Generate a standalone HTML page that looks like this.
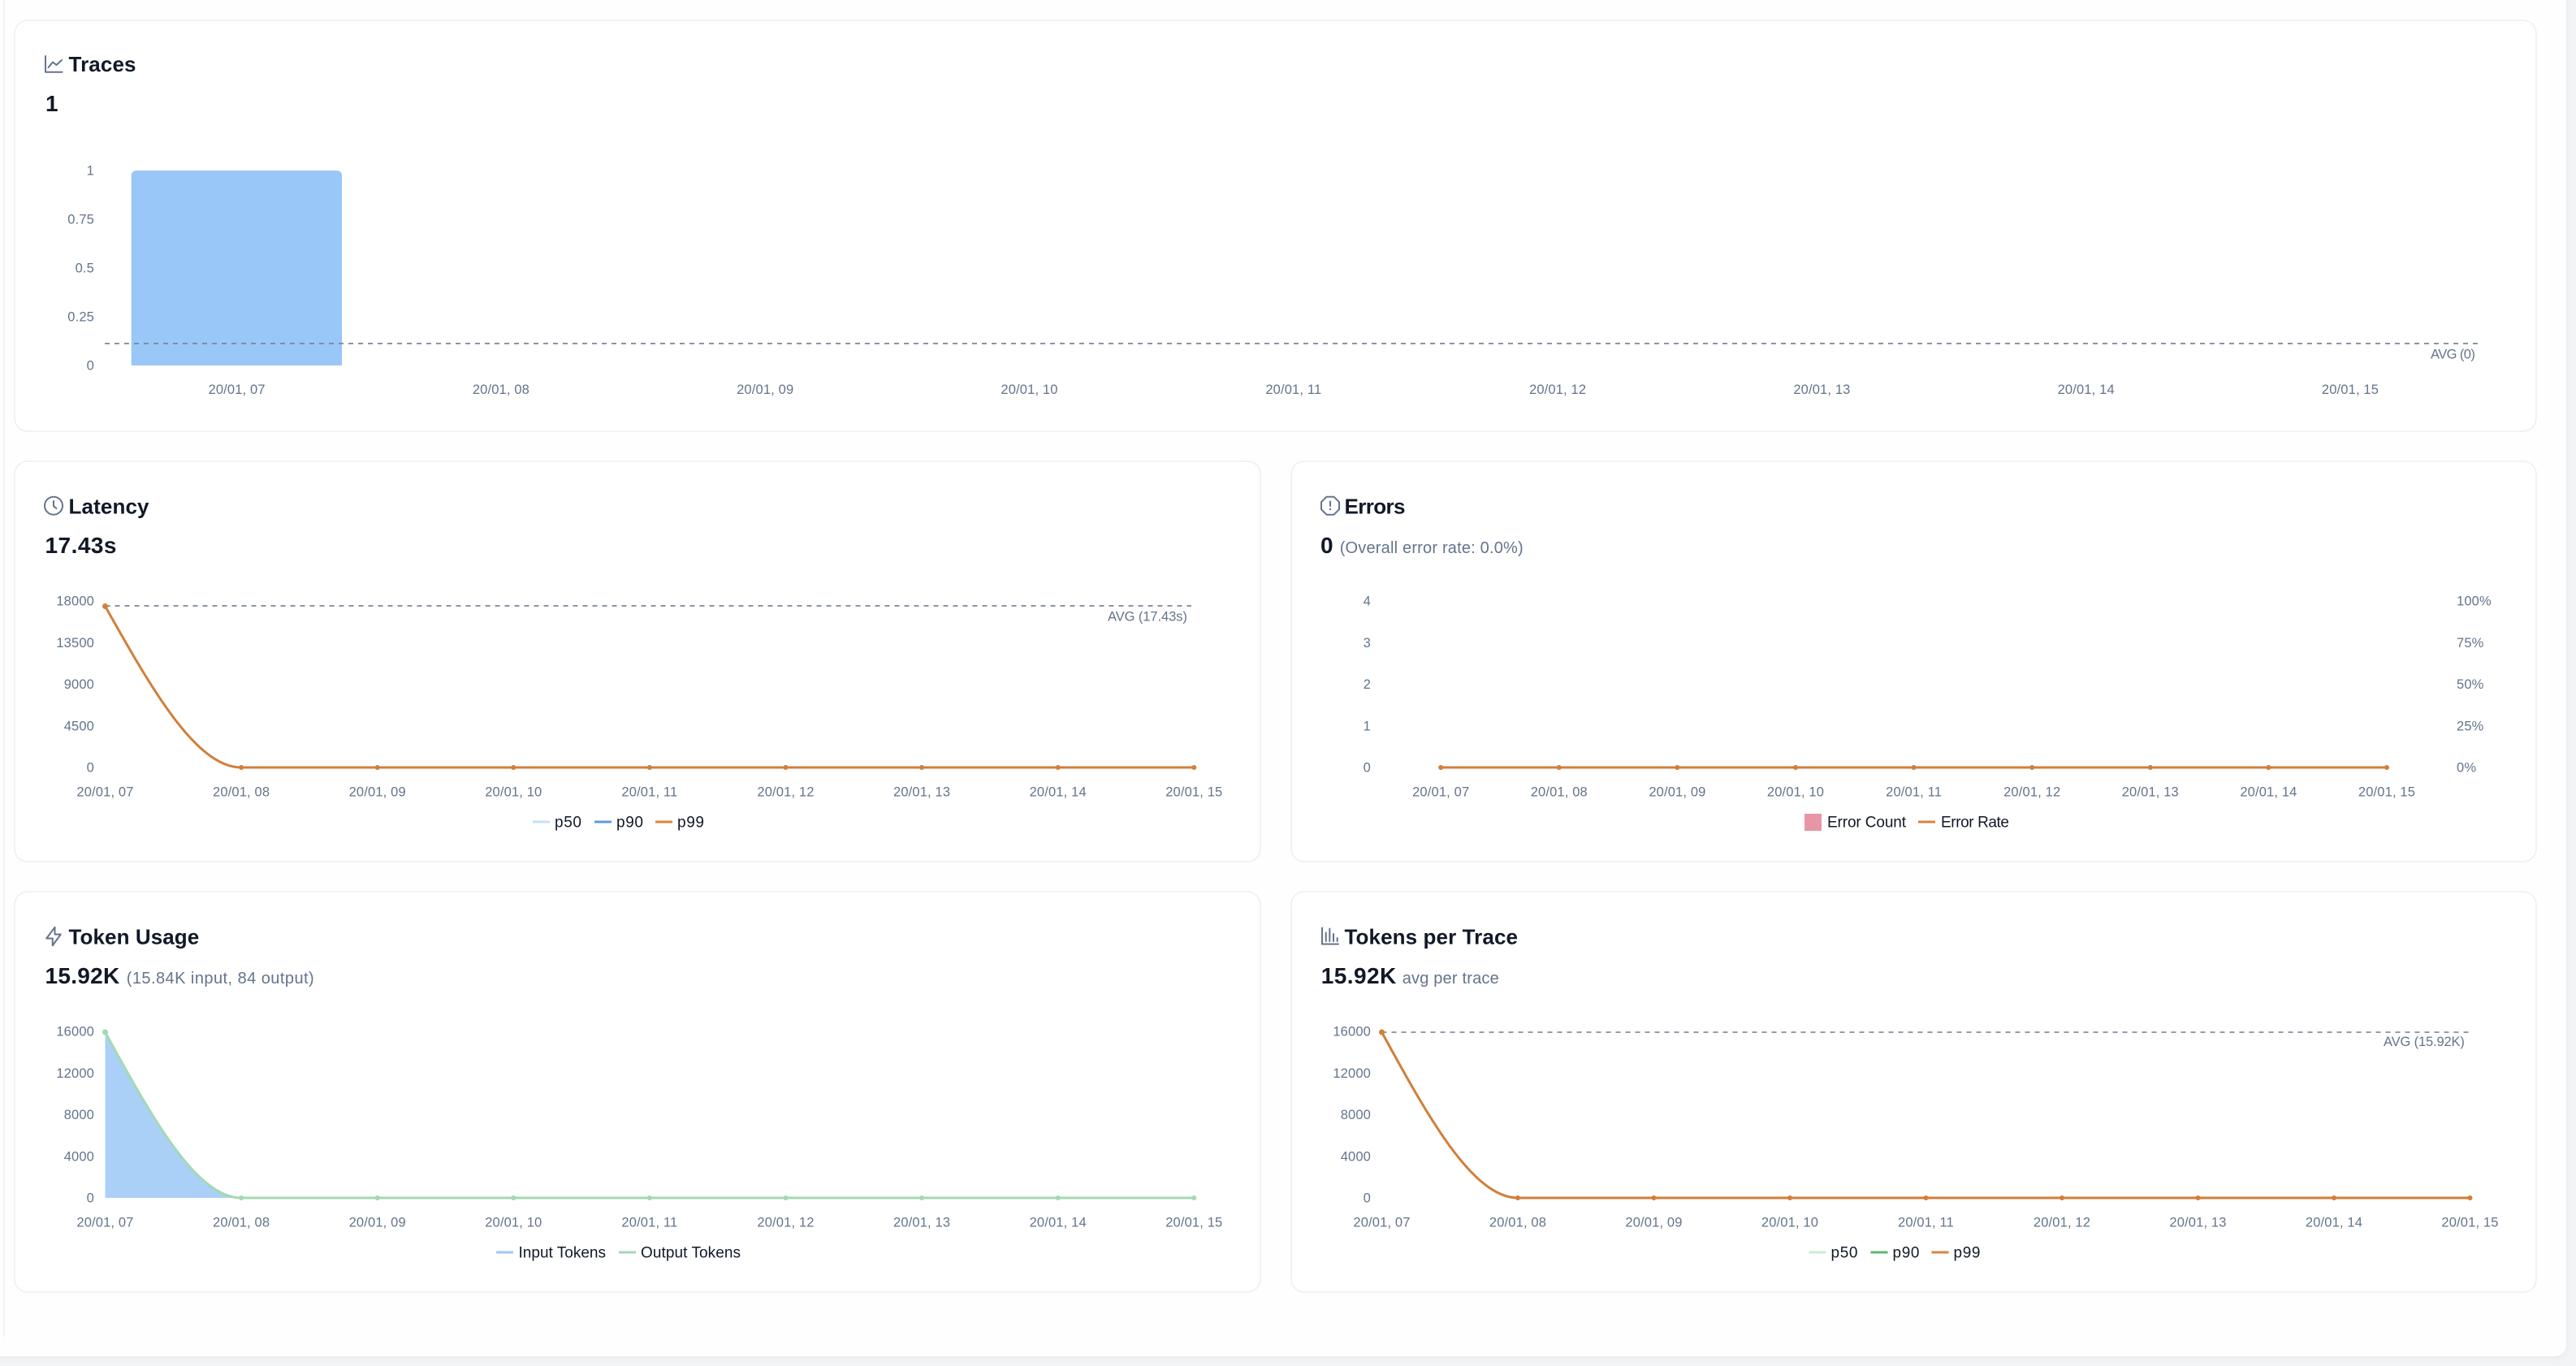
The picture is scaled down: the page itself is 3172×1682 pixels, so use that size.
<!DOCTYPE html>
<html lang="en">
<head>
<meta charset="utf-8">
<title>Dashboard</title>
<style>
html,body{margin:0;padding:0;width:3172px;height:1682px;overflow:hidden;background:#f3f4f6}
svg{position:absolute;left:0;top:0;display:block}
text{font-family:"Liberation Sans",sans-serif}
.t{font-size:26px;font-weight:700;fill:#111827}
.v{font-size:28px;font-weight:700;fill:#111827}
.s{font-size:20px;fill:#64748b}
.a{font-size:16.5px;fill:#64748b;letter-spacing:.15px}
.m{text-anchor:middle}
.e{text-anchor:end}
.l{font-size:19px;fill:#111827}
.c{fill:#fff;stroke:#eeeff2;stroke-width:1.6}
.i{fill:none;stroke:#64748b;stroke-width:2;stroke-linecap:round;stroke-linejoin:round}
.d{fill:none;stroke:#7a8696;stroke-width:1.8;stroke-dasharray:6 6}
.o{fill:none;stroke:#d17f3a;stroke-width:3}
.g{fill:none;stroke:#a3d9b3;stroke-width:3}
.od{fill:#d17f3a}
.gd{fill:#a3d9b3}
</style>
</head>
<body>
<svg width="3172" height="1682" viewBox="0 0 3172 1682" xmlns="http://www.w3.org/2000/svg">
<defs>
<filter id="sh" x="-2%" y="-2%" width="104%" height="104%"><feDropShadow dx="0" dy="2" stdDeviation="4" flood-color="#000" flood-opacity=".05"/></filter>
</defs>
<rect x="-20" y="-20" width="3180" height="1690" rx="14" fill="#fefefe" filter="url(#sh)"/>
<line x1="5" y1="0" x2="5" y2="1646" stroke="#eeeff2" stroke-width="1.5"/>

<!-- cards -->
<rect class="c" x="18" y="25" width="3105" height="506" rx="16"/>
<rect class="c" x="18" y="568" width="1534" height="493" rx="16"/>
<rect class="c" x="1590" y="568" width="1533" height="493" rx="16"/>
<rect class="c" x="18" y="1098" width="1534" height="493" rx="16"/>
<rect class="c" x="1590" y="1098" width="1533" height="493" rx="16"/>

<!-- Traces -->
<path class="i" d="M56 69V88.8H76.5"/>
<path class="i" d="M59.5 83L65 76.5L69.5 80L76 74"/>
<text class="t" x="84.5" y="88" textLength="83">Traces</text>
<text class="v" x="56" y="137">1</text>
<text class="a e" x="116" y="215.7">1</text>
<text class="a e" x="116" y="275.7">0.75</text>
<text class="a e" x="116" y="335.7">0.5</text>
<text class="a e" x="116" y="395.7">0.25</text>
<text class="a e" x="116" y="455.7">0</text>
<path d="M161.7 216a6 6 0 0 1 6-6H415a6 6 0 0 1 6 6V450H161.7z" fill="#99c7f8"/>
<line class="d" x1="129" y1="423" x2="3051" y2="423"/>
<text class="a" x="2993" y="441.5" textLength="55">AVG (0)</text>
<text class="a m" x="291.6" y="485">20/01, 07</text>
<text class="a m" x="616.9" y="485">20/01, 08</text>
<text class="a m" x="942.2" y="485">20/01, 09</text>
<text class="a m" x="1267.5" y="485">20/01, 10</text>
<text class="a m" x="1592.8" y="485">20/01, 11</text>
<text class="a m" x="1918.1" y="485">20/01, 12</text>
<text class="a m" x="2243.4" y="485">20/01, 13</text>
<text class="a m" x="2568.7" y="485">20/01, 14</text>
<text class="a m" x="2894" y="485">20/01, 15</text>

<!-- Latency -->
<circle class="i" cx="66" cy="622.7" r="11"/>
<path class="i" d="M66 617V623.3L69.5 626"/>
<text class="t" x="84.5" y="632.7" textLength="99">Latency</text>
<text class="v" x="55.5" y="681" textLength="88">17.43s</text>
<text class="a e" x="116" y="745.7">18000</text>
<text class="a e" x="116" y="797">13500</text>
<text class="a e" x="116" y="848.2">9000</text>
<text class="a e" x="116" y="899.5">4500</text>
<text class="a e" x="116" y="950.7">0</text>
<line class="d" x1="129.5" y1="746" x2="1467" y2="746"/>
<text class="a" x="1364" y="764.5" textLength="98">AVG (17.43s)</text>
<path class="o" d="M129.5 746.5C185.4 845.75 241.1 945 297.1 945H1470.3"/>
<g class="od">
<circle cx="129.5" cy="746.5" r="3.5"/><circle cx="297.1" cy="945" r="3"/><circle cx="464.7" cy="945" r="3"/><circle cx="632.3" cy="945" r="3"/><circle cx="799.9" cy="945" r="3"/><circle cx="967.5" cy="945" r="3"/><circle cx="1135.1" cy="945" r="3"/><circle cx="1302.7" cy="945" r="3"/><circle cx="1470.3" cy="945" r="3"/>
</g>
<text class="a m" x="129.5" y="980.7">20/01, 07</text>
<text class="a m" x="297.1" y="980.7">20/01, 08</text>
<text class="a m" x="464.7" y="980.7">20/01, 09</text>
<text class="a m" x="632.3" y="980.7">20/01, 10</text>
<text class="a m" x="799.9" y="980.7">20/01, 11</text>
<text class="a m" x="967.5" y="980.7">20/01, 12</text>
<text class="a m" x="1135.1" y="980.7">20/01, 13</text>
<text class="a m" x="1302.7" y="980.7">20/01, 14</text>
<text class="a m" x="1470.3" y="980.7">20/01, 15</text>
<line x1="656" y1="1012" x2="677" y2="1012" stroke="#c3e0f9" stroke-width="3"/>
<text class="l" x="683" y="1018.3" textLength="33">p50</text>
<line x1="732" y1="1012" x2="753" y2="1012" stroke="#5b9bdf" stroke-width="3"/>
<text class="l" x="759" y="1018.3" textLength="33">p90</text>
<line x1="807" y1="1012" x2="828" y2="1012" stroke="#d9853f" stroke-width="3"/>
<text class="l" x="834" y="1018.3" textLength="33">p99</text>

<!-- Errors -->
<path class="i" d="M1633.5 611.7H1642.5L1649 618.2V627.2L1642.5 633.7H1633.5L1627 627.2V618.2Z"/>
<path class="i" d="M1638 617.5V623"/>
<circle cx="1638" cy="627" r="1.2" fill="#64748b"/>
<text class="t" x="1655.5" y="632.7" textLength="75">Errors</text>
<text class="v" x="1626" y="681">0</text>
<text class="s" x="1649.7" y="681" textLength="226">(Overall error rate: 0.0%)</text>
<text class="a e" x="1688" y="745.7">4</text>
<text class="a e" x="1688" y="797">3</text>
<text class="a e" x="1688" y="848.2">2</text>
<text class="a e" x="1688" y="899.5">1</text>
<text class="a e" x="1688" y="950.7">0</text>
<text class="a" x="3025" y="745.7">100%</text>
<text class="a" x="3025" y="797">75%</text>
<text class="a" x="3025" y="848.2">50%</text>
<text class="a" x="3025" y="899.5">25%</text>
<text class="a" x="3025" y="950.7">0%</text>
<path class="o" d="M1774.2 945H2939"/>
<g class="od">
<circle cx="1774.2" cy="945" r="3"/><circle cx="1919.8" cy="945" r="3"/><circle cx="2065.4" cy="945" r="3"/><circle cx="2211" cy="945" r="3"/><circle cx="2356.6" cy="945" r="3"/><circle cx="2502.2" cy="945" r="3"/><circle cx="2647.8" cy="945" r="3"/><circle cx="2793.4" cy="945" r="3"/><circle cx="2939" cy="945" r="3"/>
</g>
<text class="a m" x="1774.2" y="980.7">20/01, 07</text>
<text class="a m" x="1919.8" y="980.7">20/01, 08</text>
<text class="a m" x="2065.4" y="980.7">20/01, 09</text>
<text class="a m" x="2211" y="980.7">20/01, 10</text>
<text class="a m" x="2356.6" y="980.7">20/01, 11</text>
<text class="a m" x="2502.2" y="980.7">20/01, 12</text>
<text class="a m" x="2647.8" y="980.7">20/01, 13</text>
<text class="a m" x="2793.4" y="980.7">20/01, 14</text>
<text class="a m" x="2939" y="980.7">20/01, 15</text>
<rect x="2222" y="1002" width="21" height="21" fill="#e995a8"/>
<text class="l" x="2250" y="1018.3" textLength="97">Error Count</text>
<line x1="2362" y1="1012" x2="2383" y2="1012" stroke="#d9853f" stroke-width="3"/>
<text class="l" x="2390" y="1018.3" textLength="84">Error Rate</text>

<!-- Token Usage -->
<path class="i" d="M67.5 1141.75V1150.5H74.75L64.75 1164.25V1155.5H57.25Z"/>
<text class="t" x="84.5" y="1162.7" textLength="160.7">Token Usage</text>
<text class="v" x="55.5" y="1211" textLength="91.7">15.92K</text>
<text class="s" x="155.7" y="1211" textLength="231">(15.84K input, 84 output)</text>
<text class="a e" x="116" y="1275.5">16000</text>
<text class="a e" x="116" y="1327">12000</text>
<text class="a e" x="116" y="1378">8000</text>
<text class="a e" x="116" y="1429.3">4000</text>
<text class="a e" x="116" y="1480.5">0</text>
<path d="M129.5 1271C185.4 1373 241.1 1475 297.1 1475H129.5Z" fill="#abd0f7"/>
<path class="g" d="M129.5 1271C185.4 1373 241.1 1475 297.1 1475H1470.3"/>
<g class="gd">
<circle cx="129.5" cy="1271" r="3.5"/><circle cx="297.1" cy="1475" r="3"/><circle cx="464.7" cy="1475" r="3"/><circle cx="632.3" cy="1475" r="3"/><circle cx="799.9" cy="1475" r="3"/><circle cx="967.5" cy="1475" r="3"/><circle cx="1135.1" cy="1475" r="3"/><circle cx="1302.7" cy="1475" r="3"/><circle cx="1470.3" cy="1475" r="3"/>
</g>
<text class="a m" x="129.5" y="1510.7">20/01, 07</text>
<text class="a m" x="297.1" y="1510.7">20/01, 08</text>
<text class="a m" x="464.7" y="1510.7">20/01, 09</text>
<text class="a m" x="632.3" y="1510.7">20/01, 10</text>
<text class="a m" x="799.9" y="1510.7">20/01, 11</text>
<text class="a m" x="967.5" y="1510.7">20/01, 12</text>
<text class="a m" x="1135.1" y="1510.7">20/01, 13</text>
<text class="a m" x="1302.7" y="1510.7">20/01, 14</text>
<text class="a m" x="1470.3" y="1510.7">20/01, 15</text>
<line x1="611" y1="1542" x2="632" y2="1542" stroke="#9fc9f7" stroke-width="3"/>
<text class="l" x="638.5" y="1548.3" textLength="107.5">Input Tokens</text>
<line x1="762" y1="1542" x2="783" y2="1542" stroke="#a3d9b3" stroke-width="3"/>
<text class="l" x="789" y="1548.3" textLength="123">Output Tokens</text>

<!-- Tokens per Trace -->
<path class="i" d="M1628 1142.5V1162.5H1648"/>
<path class="i" stroke-width="1.8" d="M1632.7 1148.5V1159M1637.3 1143.5V1159M1642 1150V1159M1646.7 1155V1159"/>
<text class="t" x="1655.5" y="1162.7" textLength="213.5">Tokens per Trace</text>
<text class="v" x="1626.7" y="1211" textLength="92.5">15.92K</text>
<text class="s" x="1726.7" y="1211" textLength="119">avg per trace</text>
<text class="a e" x="1688" y="1275.5">16000</text>
<text class="a e" x="1688" y="1327">12000</text>
<text class="a e" x="1688" y="1378">8000</text>
<text class="a e" x="1688" y="1429.3">4000</text>
<text class="a e" x="1688" y="1480.5">0</text>
<line class="d" x1="1701.5" y1="1271" x2="3040" y2="1271" style="stroke:#8490a0"/>
<text class="a" x="2935" y="1288" textLength="100">AVG (15.92K)</text>
<path class="o" d="M1701.5 1271C1757.3 1373 1813.2 1475 1869 1475H3041.5"/>
<g class="od">
<circle cx="1701.5" cy="1271" r="3.5"/><circle cx="1869" cy="1475" r="3"/><circle cx="2036.5" cy="1475" r="3"/><circle cx="2204" cy="1475" r="3"/><circle cx="2371.5" cy="1475" r="3"/><circle cx="2539" cy="1475" r="3"/><circle cx="2706.5" cy="1475" r="3"/><circle cx="2874" cy="1475" r="3"/><circle cx="3041.5" cy="1475" r="3"/>
</g>
<text class="a m" x="1701.5" y="1510.7">20/01, 07</text>
<text class="a m" x="1869" y="1510.7">20/01, 08</text>
<text class="a m" x="2036.5" y="1510.7">20/01, 09</text>
<text class="a m" x="2204" y="1510.7">20/01, 10</text>
<text class="a m" x="2371.5" y="1510.7">20/01, 11</text>
<text class="a m" x="2539" y="1510.7">20/01, 12</text>
<text class="a m" x="2706.5" y="1510.7">20/01, 13</text>
<text class="a m" x="2874" y="1510.7">20/01, 14</text>
<text class="a m" x="3041.5" y="1510.7">20/01, 15</text>
<line x1="2227.5" y1="1542" x2="2248.5" y2="1542" stroke="#c8ebd2" stroke-width="3"/>
<text class="l" x="2254.5" y="1548.3" textLength="33">p50</text>
<line x1="2303.5" y1="1542" x2="2324.5" y2="1542" stroke="#5fb573" stroke-width="3"/>
<text class="l" x="2330.5" y="1548.3" textLength="33">p90</text>
<line x1="2378.5" y1="1542" x2="2399.5" y2="1542" stroke="#d9853f" stroke-width="3"/>
<text class="l" x="2405.5" y="1548.3" textLength="33">p99</text>
</svg>
</body>
</html>
